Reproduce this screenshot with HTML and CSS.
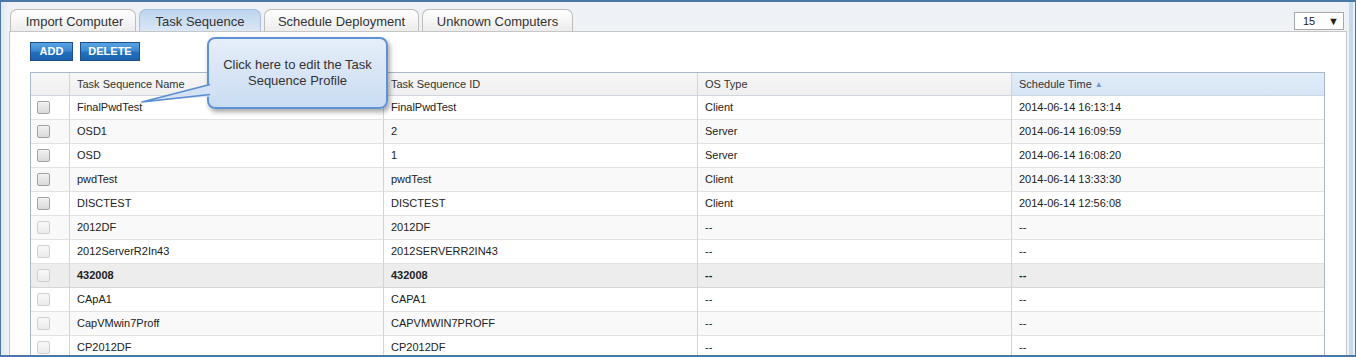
FILE: index.html
```html
<!DOCTYPE html>
<html>
<head>
<meta charset="utf-8">
<link rel="stylesheet" href="styles.css">
</head>
<body>
<div class="frame">
  <div class="tabbar">
    <div class="tab t1">Import Computer</div>
    <div class="tab t2 active">Task Sequence</div>
    <div class="tab t3">Schedule Deployment</div>
    <div class="tab t4">Unknown Computers</div>
    <div class="pager"><span>15</span><span class="arrow">▼</span></div>
  </div>
  <div class="panel">
    <div class="toolbar">
      <button class="btn add">ADD</button>
      <button class="btn del">DELETE</button>
    </div>
    <table class="grid">
      <colgroup>
        <col class="c-chk"><col class="c-name"><col class="c-id"><col class="c-os"><col class="c-time">
      </colgroup>
      <thead>
        <tr><th></th><th>Task Sequence Name</th><th>Task Sequence ID</th><th>OS Type</th><th class="sorted">Schedule Time <span class="sort">▲</span></th></tr>
      </thead>
      <tbody>
        <tr><td><span class="cb"></span></td><td>FinalPwdTest</td><td>FinalPwdTest</td><td>Client</td><td>2014-06-14 16:13:14</td></tr>
        <tr class="alt"><td><span class="cb"></span></td><td>OSD1</td><td>2</td><td>Server</td><td>2014-06-14 16:09:59</td></tr>
        <tr><td><span class="cb"></span></td><td>OSD</td><td>1</td><td>Server</td><td>2014-06-14 16:08:20</td></tr>
        <tr class="alt"><td><span class="cb"></span></td><td>pwdTest</td><td>pwdTest</td><td>Client</td><td>2014-06-14 13:33:30</td></tr>
        <tr><td><span class="cb"></span></td><td>DISCTEST</td><td>DISCTEST</td><td>Client</td><td>2014-06-14 12:56:08</td></tr>
        <tr class="alt"><td><span class="cb off"></span></td><td>2012DF</td><td>2012DF</td><td>--</td><td>--</td></tr>
        <tr><td><span class="cb off"></span></td><td>2012ServerR2In43</td><td>2012SERVERR2IN43</td><td>--</td><td>--</td></tr>
        <tr class="hover"><td><span class="cb off"></span></td><td>432008</td><td>432008</td><td>--</td><td>--</td></tr>
        <tr><td><span class="cb off"></span></td><td>CApA1</td><td>CAPA1</td><td>--</td><td>--</td></tr>
        <tr class="alt"><td><span class="cb off"></span></td><td>CapVMwin7Proff</td><td>CAPVMWIN7PROFF</td><td>--</td><td>--</td></tr>
        <tr><td><span class="cb off"></span></td><td>CP2012DF</td><td>CP2012DF</td><td>--</td><td>--</td></tr>
      </tbody>
    </table>
    <div class="callout">Click here to edit the Task<br>Sequence Profile</div>
    <svg class="pointer" width="80" height="30" viewBox="0 0 80 30">
      <polygon points="76,4 2,23 76,17" fill="#d3e2f4"/>
      <polyline points="70,5.5 2,23 70,15.5" fill="none" stroke="#5a8dd0" stroke-width="1.5" stroke-linejoin="round"/>
    </svg>
  </div>
</div>
</body>
</html>
```

FILE: styles.css
```css
html, body {
  margin: 0;
  padding: 0;
  background: #ffffff;
}

.frame {
  box-sizing: border-box;
  width: 1356px;
  height: 357px;
  overflow: hidden;
  border-top: 2px solid #4a76a8;
  border-left: 1px solid #4a76a8;
  border-bottom: 2px solid #4a76a8;
  padding: 7px 9px 0 8px;
  background:
    linear-gradient(to left, #4a76a8 0 1px, #e9eff6 1px 3px, #c7d8ec 3px 7px, #eef1f5 7px) right / 9px 100% no-repeat,
    linear-gradient(to right, #dfe7f1, #eef1f5 7px) left / 8px 100% no-repeat,
    #eef1f5;
  font-family: "Liberation Sans", Arial, sans-serif;
}

.tabbar {
  display: flex;
  align-items: flex-start;
  height: 22px;
  padding-left: 1px;
  gap: 3px;
}

.tab {
  box-sizing: border-box;
  height: 22px;
  border: 1px solid #bdbdbd;
  border-bottom: none;
  border-radius: 7px 7px 0 0;
  background: linear-gradient(#ffffff, #ececec);
  color: #333333;
  font-size: 13px;
  line-height: 23px;
  text-align: center;
  white-space: nowrap;
}

.t1 { width: 126px; padding-left: 3px; }
.t2 { width: 122px; }
.t3 { width: 155px; }
.t4 { width: 151px; }

.tab.active {
  background: linear-gradient(#bcd4ee, #dae7f6);
  border-color: #a9c0da;
}

.pager {
  box-sizing: border-box;
  margin-left: auto;
  margin-top: 3px;
  margin-right: 3px;
  width: 50px;
  height: 18px;
  border: 1px solid #a9a9a9;
  background: #ffffff;
  display: flex;
  align-items: center;
  justify-content: space-between;
  padding: 0 4px 0 8px;
  font-size: 11px;
  color: #222222;
}

.pager .arrow {
  font-size: 11px;
}

.panel {
  position: relative;
  height: 400px;
  background: #ffffff;
  border: 1px solid #c6c6c6;
  padding: 10px 20px 0 20px;
}

.toolbar {
  display: flex;
  gap: 7px;
  height: 19px;
}

.btn {
  box-sizing: border-box;
  height: 19px;
  margin: 0;
  padding: 0;
  border: 1px solid #1a4f8c;
  background: linear-gradient(#5aa4e4 0%, #3a88d2 48%, #2370bf 52%, #1b62ad 100%);
  color: #ffffff;
  font-family: "Liberation Sans", Arial, sans-serif;
  font-weight: bold;
  font-size: 11px;
  line-height: 17px;
}

.btn.add { width: 43px; }
.btn.del { width: 60px; }

.grid {
  margin-top: 11px;
  width: 1295px;
  table-layout: fixed;
  border-collapse: separate;
  border-spacing: 0;
  border: 1px solid #a8b8cd;
  font-size: 11px;
  color: #222222;
}

.c-chk { width: 39px; }
.c-name { width: 314px; }
.c-id { width: 314px; }
.c-os { width: 314px; }
.c-time { width: 312px; }

.grid th,
.grid td {
  box-sizing: border-box;
  padding: 0 6px 2px 7px;
  text-align: left;
  white-space: nowrap;
  overflow: hidden;
  border-right: 1px solid #d4d4d4;
  border-bottom: 1px solid #e2e2e2;
}

.grid th:last-child,
.grid td:last-child {
  border-right: none;
}

.grid th {
  height: 23px;
  padding-bottom: 0;
  font-weight: normal;
  color: #333333;
  background: linear-gradient(#f7f7f7, #efefef);
  border-bottom: 1px solid #cfd6df;
}

.grid th.sorted {
  background: linear-gradient(#e2ecf8, #d6e5f6);
}

.sort {
  font-size: 8px;
  color: #6b9bd2;
  vertical-align: 1px;
}

.grid td {
  height: 24px;
}

.grid td:first-child {
  padding: 0 0 1px 6px;
}

.grid tr.alt td {
  background: #f9f9f9;
}

.grid tr.hover td {
  background: #ededed;
  font-weight: bold;
  border-bottom-color: #d6d6d6;
}

.cb {
  display: block;
  box-sizing: border-box;
  width: 13px;
  height: 13px;
  border: 1px solid #a2a2a2;
  border-radius: 2px;
  background: linear-gradient(#f4f4f4, #d9d9d9);
}

.cb.off {
  border-color: #d0d0d0;
  background: linear-gradient(#f8f8f8, #ebebeb);
}

.callout {
  position: absolute;
  left: 197px;
  top: 5px;
  box-sizing: border-box;
  width: 181px;
  height: 72px;
  border: 2px solid #5f92d4;
  border-radius: 8px;
  background: linear-gradient(#e6eef9, #c9dcf2);
  box-shadow: 2px 3px 5px rgba(0, 0, 0, 0.35);
  display: flex;
  align-items: center;
  justify-content: center;
  text-align: center;
  font-size: 13px;
  line-height: 16px;
  color: #333333;
}

.pointer {
  position: absolute;
  left: 130px;
  top: 47px;
}
```
